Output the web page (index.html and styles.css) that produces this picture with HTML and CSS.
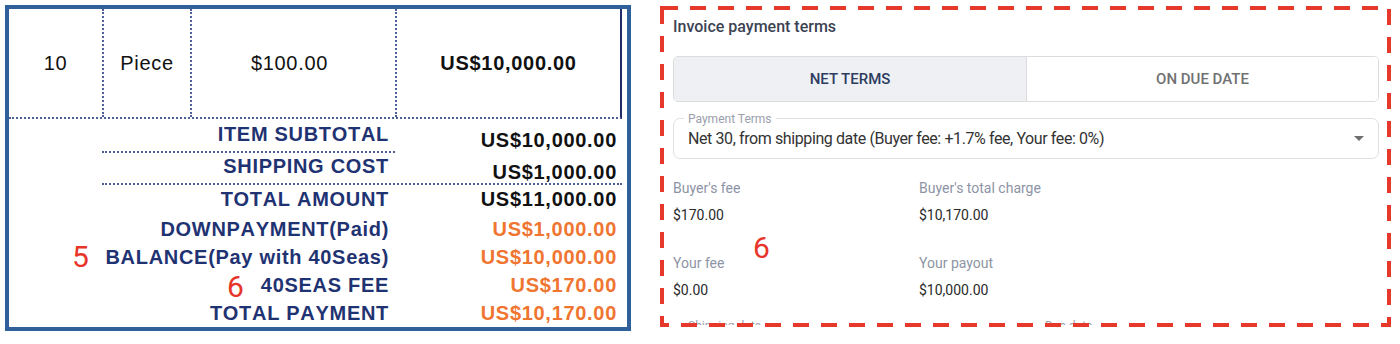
FILE: index.html
```html
<!DOCTYPE html>
<html lang="en">
<head>
<meta charset="utf-8">
<title>Invoice payment terms</title>
<link rel="stylesheet" href="styles.css">
</head>
<body>
<div class="page">
  <section class="invoice">
    <div class="items">
      <div class="cell">10</div>
      <div class="cell">Piece</div>
      <div class="cell price">$100.00</div>
      <div class="cell strong">US$10,000.00</div>
    </div>
    <div class="summary">
      <div class="srow row-subtotal"><span class="lab">ITEM SUBTOTAL</span><span class="val">US$10,000.00</span></div>
      <div class="srow row-shipping"><span class="lab">SHIPPING COST</span><span class="val">US$1,000.00</span></div>
      <div class="srow row-total"><span class="lab">TOTAL AMOUNT</span><span class="val">US$11,000.00</span></div>
      <div class="srow row-down"><span class="lab">DOWNPAYMENT(Paid)</span><span class="val orange">US$1,000.00</span></div>
      <div class="srow row-next"><span class="lab">BALANCE(Pay with 40Seas)</span><span class="val orange">US$10,000.00</span></div>
      <div class="srow row-next"><span class="lab">40SEAS FEE</span><span class="val orange">US$170.00</span></div>
      <div class="srow row-next"><span class="lab">TOTAL PAYMENT</span><span class="val orange">US$10,170.00</span></div>
    </div>
  </section>

  <section class="terms">
    <div class="terms-body">
      <h2 class="terms-title">Invoice payment terms</h2>
      <div class="toggle">
        <div class="opt active">NET TERMS</div>
        <div class="opt">ON DUE DATE</div>
      </div>
      <div class="field select">
        <span class="float-label">Payment Terms</span>
        <span class="select-value">Net 30, from shipping date (Buyer fee: +1.7% fee, Your fee: 0%)</span>
        <svg class="caret" width="10" height="5" viewBox="0 0 10 5"><path d="M0 0h10L5 5z" fill="#6f6f6f"/></svg>
      </div>
      <div class="facts">
        <div class="fact"><div class="fact-label">Buyer's fee</div><div class="fact-value">$170.00</div></div>
        <div class="fact"><div class="fact-label">Buyer's total charge</div><div class="fact-value">$10,170.00</div></div>
        <div class="fact"><div class="fact-label">Your fee</div><div class="fact-value">$0.00</div></div>
        <div class="fact"><div class="fact-label">Your payout</div><div class="fact-value">$10,000.00</div></div>
      </div>
      <div class="dates">
        <div class="field date-field"><span class="float-label">Shipping date</span></div>
        <div class="field date-field"><span class="float-label">Due date</span></div>
      </div>
    </div>
    <svg class="dash-frame" width="731" height="321" viewBox="0 0 731 321">
      <rect x="2" y="2" width="727" height="317" fill="none" stroke="#e7392b" stroke-width="4" stroke-dasharray="16 12"/>
    </svg>
  </section>

  <span class="note note-5">5</span>
  <span class="note note-6a">6</span>
  <span class="note note-6b">6</span>
</div>
</body>
</html>
```

FILE: styles.css
```css
html, body {
  margin: 0;
  padding: 0;
  background: #ffffff;
}

.page {
  position: relative;
  display: flex;
  align-items: flex-start;
  padding: 5px 0 0 5px;
  width: 1400px;
  height: 344px;
  box-sizing: border-box;
  overflow: hidden;
}

/* ---------- Left: invoice summary ---------- */
.invoice {
  box-sizing: border-box;
  width: 626px;
  height: 326px;
  border: 4px solid #30609a;
  font-family: "Liberation Sans", Arial, sans-serif;
  font-size: 20px;
  line-height: 22px;
  letter-spacing: 0.7px;
  font-kerning: none;
  color: #111111;
}

.items {
  display: grid;
  grid-template-columns: 93px 88px 205px 225px;
  width: 613px;
  box-sizing: border-box;
  border-right: 2px solid #1f2d6b;
  border-bottom: 2px dotted #4e5f9c;
}

.cell {
  box-sizing: border-box;
  height: 108px;
  display: flex;
  align-items: center;
  justify-content: center;
}

.cell + .cell {
  border-left: 2px dotted #4e5f9c;
}

.cell.price {
  padding-right: 8px;
}

.cell.strong {
  font-weight: 700;
}

.summary {
  display: flex;
  flex-direction: column;
  padding: 1px 0 0 93px;
  width: 613px;
  box-sizing: border-box;
}

.srow {
  display: grid;
  grid-template-columns: 293px 227px;
  align-items: start;
  font-weight: 700;
}

.lab {
  text-align: right;
  padding-right: 6px;
  color: #1f3372;
}

.val {
  text-align: right;
  padding-right: 5px;
  color: #111111;
}

.val.orange {
  color: #ef7531;
}

.row-subtotal .lab {
  padding-top: 3px;
  padding-bottom: 6px;
  border-bottom: 2px dotted #4e5f9c;
}

.row-subtotal .val {
  padding-top: 9px;
}

.row-shipping {
  border-bottom: 2px dotted #4e5f9c;
}

.row-shipping .lab {
  padding-top: 2px;
}

.row-shipping .val {
  padding-top: 8px;
}

.row-total {
  padding-top: 3px;
}

.row-down {
  margin-top: 8px;
}

.row-next {
  margin-top: 6px;
}

/* ---------- Right: payment terms panel ---------- */
.terms {
  position: relative;
  margin: 1px 0 0 29px;
  width: 731px;
  height: 321px;
  font-family: Roboto, "Noto Sans", sans-serif;
}

.terms-body {
  box-sizing: border-box;
  height: 319px;
  overflow: hidden;
  padding: 11px 12px 0 13px;
}

.terms-title {
  margin: 0;
  font-size: 16px;
  line-height: 20px;
  font-weight: 500;
  color: #3c4353;
}

.toggle {
  margin-top: 19px;
  height: 46px;
  box-sizing: border-box;
  display: grid;
  grid-template-columns: 1fr 1fr;
  border: 1px solid #dcdcdc;
  border-radius: 5px;
  overflow: hidden;
}

.opt {
  display: flex;
  align-items: center;
  justify-content: center;
  font-size: 15px;
  font-weight: 500;
  color: #717171;
  background: #ffffff;
}

.opt + .opt {
  border-left: 1px solid #dcdcdc;
}

.opt.active {
  background: #eff0f4;
  color: #2d3d5f;
}

.field {
  position: relative;
  box-sizing: border-box;
  border: 1px solid #e0e0e0;
  border-radius: 7px;
}

.select {
  margin-top: 16px;
  height: 41px;
  display: flex;
  align-items: center;
  padding: 0 14px;
}

.float-label {
  position: absolute;
  top: -7px;
  left: 10px;
  padding: 0 4px;
  background: #ffffff;
  font-size: 12px;
  line-height: 14px;
  color: #9aa0ab;
}

.select-value {
  font-size: 16px;
  line-height: 20px;
  letter-spacing: -0.4px;
  color: #333333;
}

.caret {
  margin-left: auto;
}

.facts {
  margin-top: 19px;
  display: grid;
  grid-template-columns: 246px 1fr;
  row-gap: 28px;
}

.fact-label {
  font-size: 14px;
  line-height: 20px;
  color: #8d94a5;
}

.fact-value {
  margin-top: 7px;
  font-size: 14px;
  line-height: 20px;
  color: #2a2a2a;
}

.dates {
  margin-top: 25px;
  display: grid;
  grid-template-columns: 1fr 1fr;
  column-gap: 8px;
}

.date-field {
  height: 40px;
}

.dash-frame {
  position: absolute;
  left: 0;
  top: 0;
  pointer-events: none;
}

/* ---------- Red annotation numbers ---------- */
.note {
  position: absolute;
  font-family: Roboto, "Noto Sans", sans-serif;
  font-weight: 400;
  font-size: 30px;
  line-height: 30px;
  color: #e8352a;
}

.note-5 { left: 72px; top: 242px; }
.note-6a { left: 227px; top: 272px; }
.note-6b { left: 753px; top: 233px; }
```
